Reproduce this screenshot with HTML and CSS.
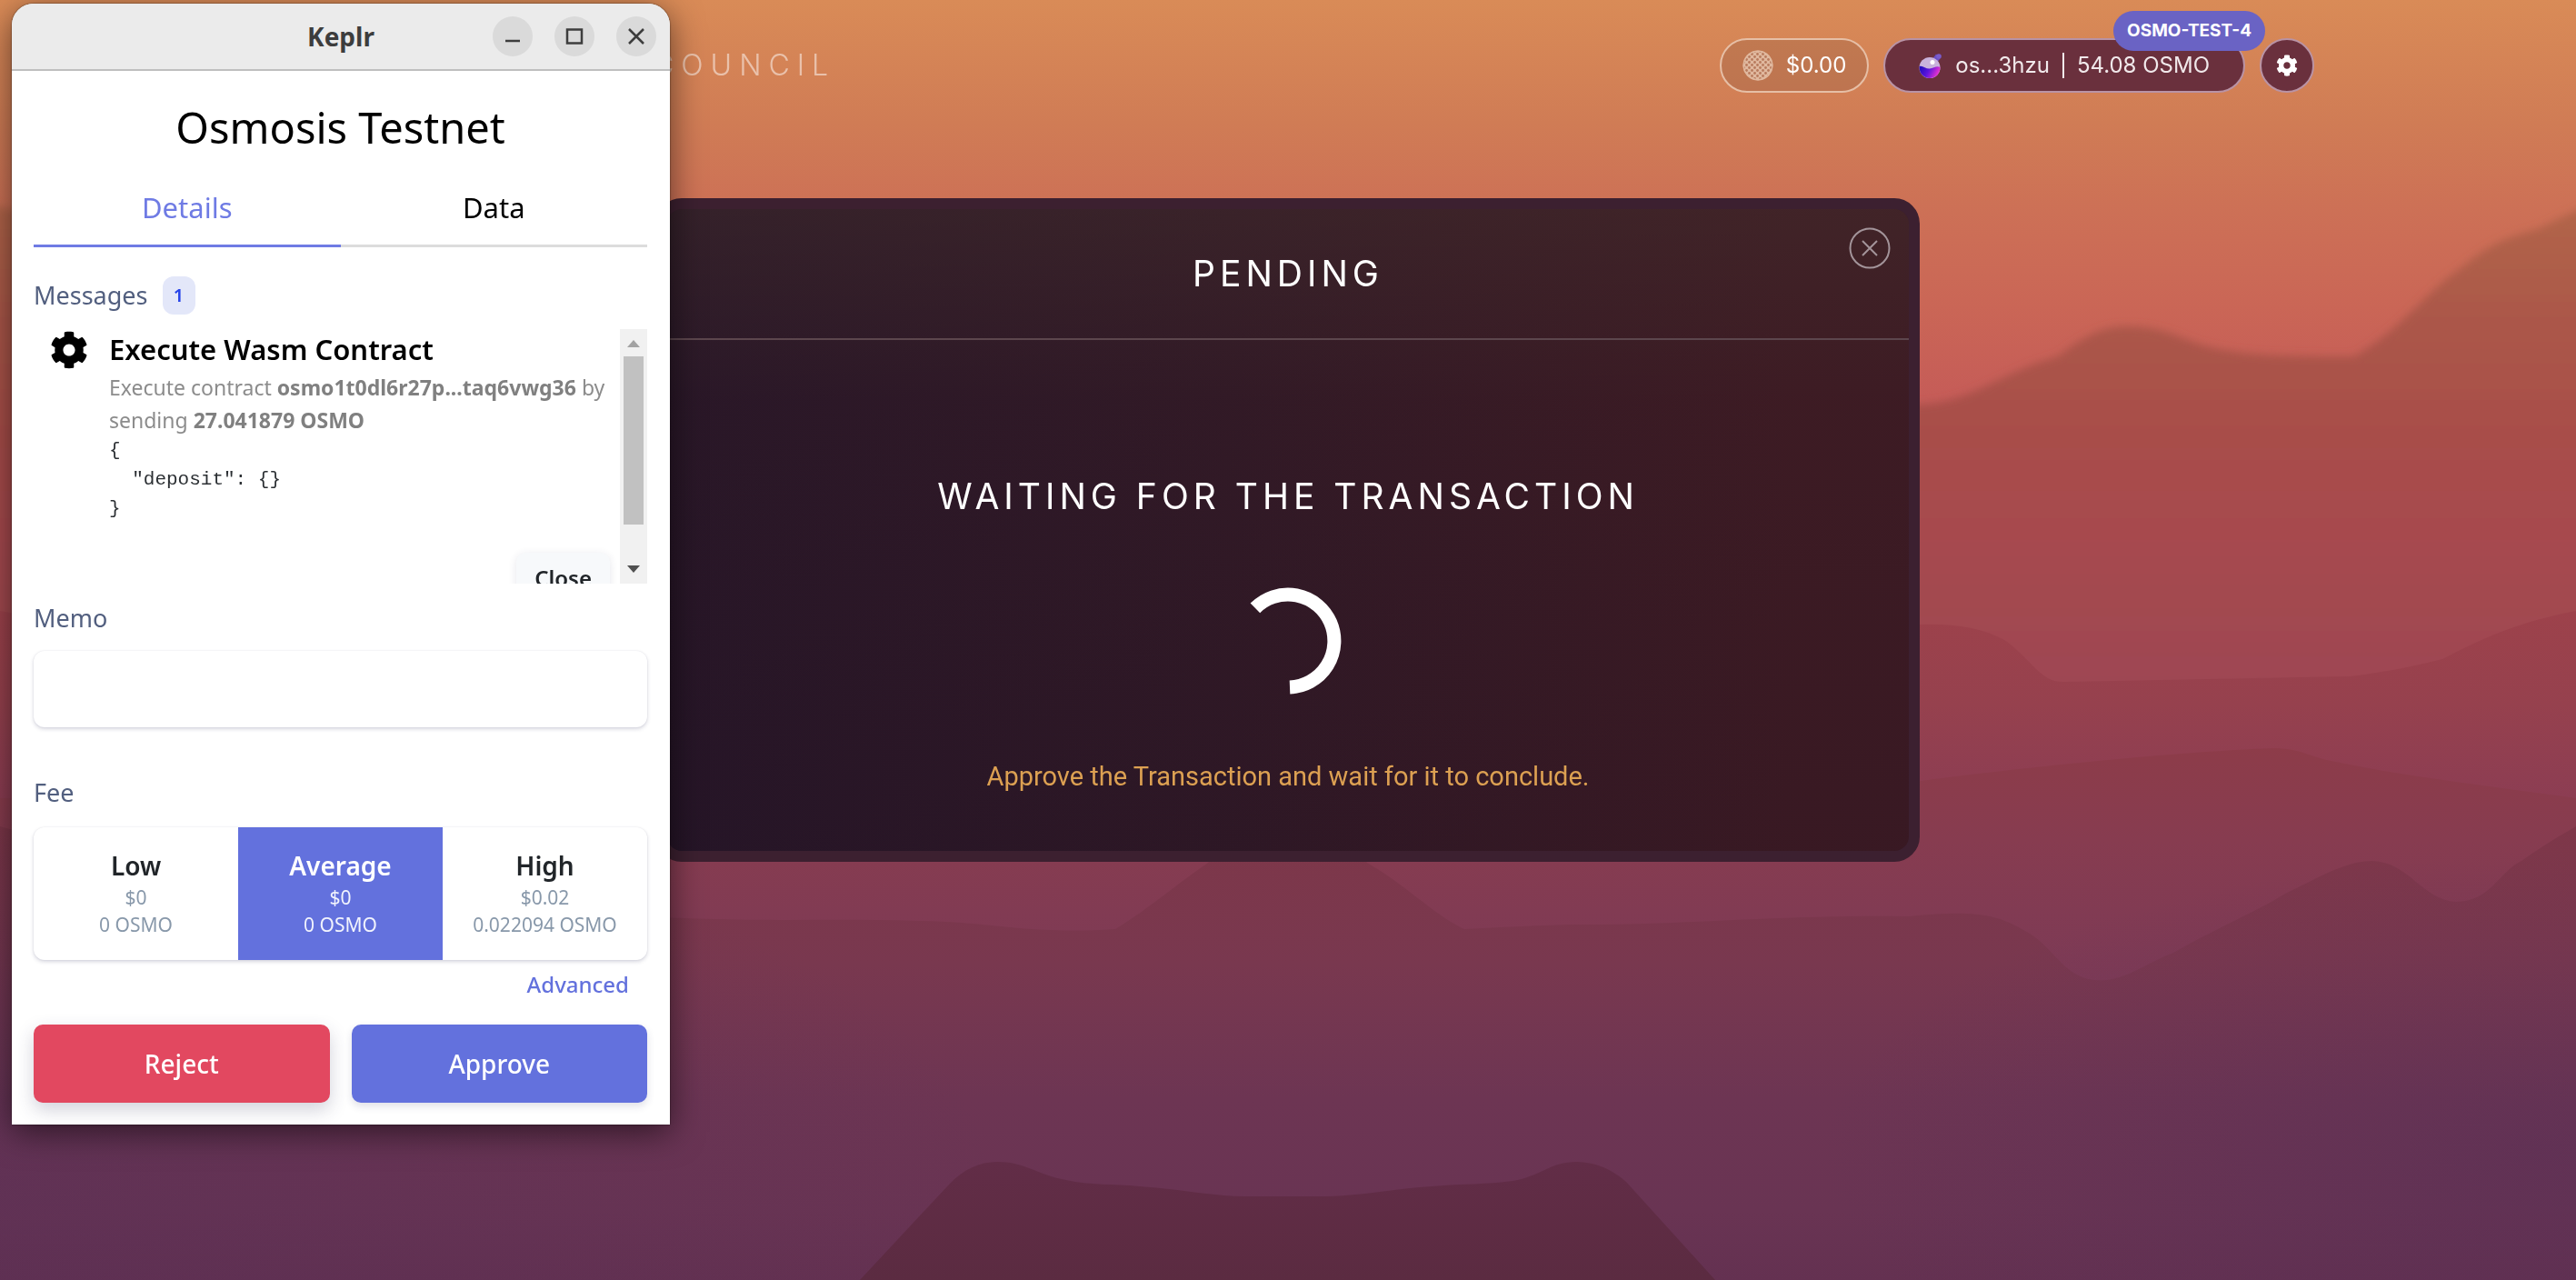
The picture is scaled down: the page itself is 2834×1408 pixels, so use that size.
FILE: index.html
```html
<!DOCTYPE html>
<html lang="en">
<head>
<meta charset="utf-8">
<meta name="viewport" content="width=device-width, initial-scale=1">
<title>Council</title>
<link rel="stylesheet" href="styles.css">
</head>
<body>
<svg class="scene" viewBox="0 0 2834 1408" preserveAspectRatio="none" aria-hidden="true">
  <defs>
    <linearGradient id="sky" gradientUnits="userSpaceOnUse" x1="0" y1="0" x2="0" y2="450">
      <stop offset="0" stop-color="#d98b57"/><stop offset=".3" stop-color="#d07c55"/><stop offset=".5" stop-color="#cd7156"/><stop offset=".75" stop-color="#ca6656"/><stop offset="1" stop-color="#c55b58"/>
    </linearGradient>
    <linearGradient id="ridge1" gradientUnits="userSpaceOnUse" x1="0" y1="220" x2="0" y2="750">
      <stop offset="0" stop-color="#b2664a"/><stop offset=".25" stop-color="#ab574a"/><stop offset=".5" stop-color="#a84d4a"/><stop offset=".68" stop-color="#a74a4e"/><stop offset="1" stop-color="#9e4652"/>
    </linearGradient>
    <linearGradient id="ridge2" gradientUnits="userSpaceOnUse" x1="0" y1="670" x2="0" y2="880">
      <stop offset="0" stop-color="#9d424b"/><stop offset=".5" stop-color="#96414e"/><stop offset="1" stop-color="#8c3d53"/>
    </linearGradient>
    <linearGradient id="ridge3" gradientUnits="userSpaceOnUse" x1="0" y1="820" x2="0" y2="1080">
      <stop offset="0" stop-color="#8d3c49"/><stop offset=".4" stop-color="#873c50"/><stop offset="1" stop-color="#7c3a56"/>
    </linearGradient>
    <linearGradient id="ridge4" gradientUnits="userSpaceOnUse" x1="0" y1="910" x2="0" y2="1408">
      <stop offset="0" stop-color="#7e3749"/><stop offset=".3" stop-color="#79384f"/><stop offset=".6" stop-color="#6d3553"/><stop offset=".85" stop-color="#693453"/><stop offset="1" stop-color="#643151"/>
    </linearGradient>
    <linearGradient id="front" gradientUnits="userSpaceOnUse" x1="0" y1="1278" x2="0" y2="1408">
      <stop offset="0" stop-color="#622d47"/><stop offset="1" stop-color="#5b2b41"/>
    </linearGradient>
    <radialGradient id="dusk">
      <stop offset="0" stop-color="#4c2c58" stop-opacity=".32"/><stop offset="1" stop-color="#4c2c58" stop-opacity="0"/>
    </radialGradient>
    <filter id="soft" x="-5%" y="-5%" width="110%" height="110%"><feGaussianBlur stdDeviation="5"/></filter>
  </defs>
  <rect width="2834" height="1408" fill="url(#sky)"/>
  <path filter="url(#soft)" fill="url(#ridge1)" d="M-60 215C200 260 400 390 700 420C1100 440 1500 400 2113 445C2170 442 2200 410 2264 392C2300 364 2320 358 2345 359C2391 361 2400 376 2442 384C2480 391 2510 392 2590 392C2640 364 2670 320 2707 295C2748 262 2760 262 2794 251C2820 238 2850 222 2900 210V1460H-60Z"/>
  <path fill="url(#ridge2)" d="M0 672C500 760 1500 687 2113 687C2150 686 2180 690 2207 705C2235 726 2245 750 2269 750L2585 744C2620 740 2650 734 2687 725C2730 703 2770 684 2834 672V1408H0Z"/>
  <path fill="url(#ridge3)" d="M0 878C700 870 1500 880 2113 859C2200 847 2400 826 2503 823C2530 823 2545 834 2565 837C2650 855 2750 866 2834 878V1408H0Z"/>
  <path fill="url(#ridge4)" d="M0 909C300 990 500 1000 754 1010C850 1014 920 1010 1012 1013C1090 1014 1130 1028 1227 1022C1262 1001 1295 972 1329 949L1340 930H1490L1504 949C1545 972 1580 1008 1611 1022C1650 1020 1690 1018 1727 1017C1850 1018 1950 1006 2100 1008C2180 1000 2200 1008 2228 1024C2264 1043 2270 1082 2318 1078C2345 1074 2360 1060 2391 1048C2440 1020 2480 1004 2514 983C2550 966 2580 947 2610 947C2650 948 2665 990 2702 992C2740 992 2750 958 2774 947C2795 932 2815 920 2834 909V1408H0Z"/>
  <ellipse cx="0" cy="1300" rx="1100" ry="420" fill="url(#dusk)"/>
  <ellipse cx="2800" cy="1270" rx="800" ry="330" fill="url(#dusk)"/>
  <path fill="url(#front)" d="M946 1408L1044 1303C1060 1286 1078 1278 1097 1278C1128 1278 1140 1292 1173 1298C1200 1304 1225 1302 1254 1305C1300 1308 1335 1316 1370 1316H1459C1500 1315 1530 1308 1575 1305C1610 1302 1635 1303 1664 1299C1695 1294 1705 1278 1735 1278C1760 1279 1775 1288 1789 1300L1887 1408Z"/>
</svg>

<header class="topbar">
  <a class="brand" href="#">COUNCIL</a>
  <nav class="tools" aria-label="Wallet">
    <button class="pill price" type="button">
      <svg class="coin" viewBox="0 0 34 34" aria-hidden="true">
        <defs><pattern id="mesh" width="6" height="6" patternUnits="userSpaceOnUse"><circle cx="1.5" cy="1.5" r="1.4" fill="#b87a5c"/><circle cx="4.5" cy="4.5" r="1.4" fill="#b87a5c"/></pattern></defs>
        <circle cx="17" cy="17" r="16.500" fill="#e0b89e"/><circle cx="17" cy="17" r="15" fill="url(#mesh)"/><circle cx="17" cy="17" r="16" fill="none" stroke="#e0b89e" stroke-width="1"/>
      </svg>
      <span>$0.00</span>
    </button>
    <div class="wallet">
      <button class="pill account" type="button">
        <svg class="flask" viewBox="0 0 26 28" aria-hidden="true">
          <defs><linearGradient id="potion" x1="0" y1="0" x2="1" y2="0.3"><stop offset="0" stop-color="#1c0bb5"/><stop offset=".5" stop-color="#5a14dc"/><stop offset="1" stop-color="#e832d0"/></linearGradient></defs>
          <path d="M15 7L19 1.500L24 5.500L20 11Z" fill="#6a4fc4"/><circle cx="22" cy="4" r="2.800" fill="#7a5ccc"/>
          <circle cx="12" cy="16.500" r="11.500" fill="#c9b2dc"/>
          <path d="M.6 15C4 13.500 8 18 12 17.500C16 17 20 14 23.500 16C23.500 23 18.500 28 12 28S.2 22.500.6 15Z" fill="url(#potion)"/>
          <circle cx="15" cy="10.500" r="2.500" fill="#fff"/>
        </svg>
        <span>os...3hzu</span><i class="bar"></i><span>54.08 OSMO</span>
      </button>
      <span class="network">OSMO-TEST-4</span>
    </div>
    <button class="pill settings" type="button" aria-label="Settings">
      <svg viewBox="0 0 512 512" aria-hidden="true"><path fill="currentColor" d="M487.4 315.700l-42.600-24.600c4.300-23.200 4.300-47 0-70.200l42.600-24.600c4.900-2.800 7.100-8.600 5.500-14-11.100-35.600-30-67.800-54.700-94.600-3.800-4.100-10-5.100-14.800-2.300L380.800 110c-17.900-15.400-38.500-27.300-60.800-35.100V25.800c0-5.600-3.900-10.500-9.400-11.700-36.700-8.200-74.300-7.800-109.200 0-5.500 1.200-9.400 6.100-9.400 11.700V75c-22.200 7.900-42.800 19.800-60.800 35.100L88.700 85.500c-4.900-2.800-11-1.900-14.800 2.300-24.700 26.700-43.600 58.900-54.700 94.600-1.700 5.400.6 11.200 5.500 14L67.300 221c-4.300 23.200-4.300 47 0 70.200l-42.600 24.600c-4.900 2.800-7.100 8.600-5.500 14 11.100 35.600 30 67.800 54.700 94.600 3.800 4.100 10 5.100 14.800 2.300l42.600-24.600c17.900 15.400 38.500 27.300 60.800 35.100v49.200c0 5.600 3.900 10.500 9.400 11.700 36.700 8.200 74.300 7.800 109.200 0 5.500-1.200 9.400-6.100 9.400-11.700v-49.200c22.200-7.900 42.800-19.800 60.800-35.100l42.600 24.600c4.900 2.800 11 1.900 14.800-2.300 24.700-26.700 43.600-58.900 54.700-94.600 1.500-5.500-.7-11.300-5.600-14.100zM256 336c-44.100 0-80-35.900-80-80s35.900-80 80-80 80 35.900 80 80-35.900 80-80 80z"/></svg>
    </button>
  </nav>
</header>

<main class="stage">
  <section class="dialog" role="dialog" aria-labelledby="dialog-title">
    <div class="dialog-head">
      <h2 id="dialog-title" class="headline">PENDING</h2>
      <button class="dismiss" type="button" aria-label="Close dialog">
        <svg viewBox="0 0 46 46" fill="none" stroke="#a3949a" stroke-width="2" aria-hidden="true"><circle cx="23" cy="23" r="21.500"/><path d="M15 15L31 31M31 15L15 31"/></svg>
      </button>
    </div>
    <div class="dialog-body">
      <p class="headline">WAITING FOR THE TRANSACTION</p>
      <svg class="spinner" viewBox="0 0 118 118" fill="none" stroke="#fff" stroke-width="15" aria-hidden="true"><path d="M22.900 22.900A51 51 0 1 1 61 110"/></svg>
      <p class="hint">Approve the Transaction and wait for it to conclude.</p>
    </div>
  </section>
</main>

<aside class="window" aria-label="Keplr">
  <div class="titlebar">
    <span class="window-name">Keplr</span>
    <div class="window-controls">
      <button type="button" aria-label="Minimize"><svg viewBox="0 0 44 44"><path d="M14 27H30"/></svg></button>
      <button type="button" aria-label="Maximize"><svg viewBox="0 0 44 44"><path d="M14 14.500H30V29.500H14Z"/></svg></button>
      <button type="button" aria-label="Close window"><svg viewBox="0 0 44 44"><path d="M14 14L30 30M30 14L14 30"/></svg></button>
    </div>
  </div>
  <div class="window-body">
    <h1>Osmosis Testnet</h1>
    <div class="tabs" role="tablist">
      <button class="tab active" type="button" role="tab" aria-selected="true">Details</button>
      <button class="tab" type="button" role="tab" aria-selected="false">Data</button>
    </div>
    <div class="section-label messages-label">Messages <span class="count">1</span></div>
    <div class="messages">
      <div class="message">
        <svg class="gear" viewBox="0 0 512 512" aria-hidden="true"><path d="M487.4 315.700l-42.600-24.600c4.300-23.200 4.300-47 0-70.200l42.600-24.600c4.900-2.800 7.100-8.600 5.500-14-11.100-35.600-30-67.800-54.700-94.600-3.800-4.100-10-5.100-14.800-2.300L380.800 110c-17.900-15.400-38.500-27.300-60.800-35.100V25.800c0-5.600-3.900-10.500-9.400-11.700-36.700-8.200-74.300-7.800-109.200 0-5.500 1.200-9.400 6.100-9.400 11.700V75c-22.200 7.900-42.800 19.800-60.800 35.100L88.700 85.500c-4.900-2.800-11-1.900-14.800 2.300-24.700 26.700-43.600 58.900-54.700 94.600-1.700 5.400.6 11.200 5.500 14L67.300 221c-4.300 23.200-4.300 47 0 70.200l-42.600 24.600c-4.900 2.800-7.100 8.600-5.500 14 11.100 35.600 30 67.800 54.700 94.600 3.800 4.100 10 5.100 14.800 2.300l42.600-24.600c17.900 15.400 38.500 27.300 60.800 35.100v49.200c0 5.600 3.900 10.500 9.400 11.700 36.700 8.200 74.300 7.800 109.200 0 5.500-1.200 9.400-6.100 9.400-11.700v-49.200c22.200-7.900 42.800-19.800 60.800-35.100l42.600 24.600c4.900 2.800 11 1.900 14.800-2.300 24.700-26.700 43.600-58.900 54.700-94.600 1.500-5.500-.7-11.300-5.600-14.100zM256 336c-44.100 0-80-35.900-80-80s35.900-80 80-80 80 35.900 80 80-35.900 80-80 80z"/></svg>
        <div class="message-text">
          <h3>Execute Wasm Contract</h3>
          <p>Execute contract <b>osmo1t0dl6r27p...taq6vwg36</b> by sending <b>27.041879 OSMO</b></p>
<pre>{
  "deposit": {}
}</pre>
          <button class="collapse" type="button">Close</button>
        </div>
      </div>
      <div class="scrollbar" aria-hidden="true">
        <svg viewBox="0 0 30 30"><path fill="#a3a3a3" d="M8 20L15 12L22 20Z"/></svg>
        <div class="track"><div class="thumb"></div></div>
        <svg viewBox="0 0 30 30"><path fill="#505050" d="M8 10L15 18L22 10Z"/></svg>
      </div>
    </div>
    <label class="section-label memo-label" for="memo">Memo</label>
    <input class="memo" id="memo" type="text">
    <div class="section-label fee-label" id="fee-label">Fee</div>
    <div class="fees" role="group" aria-labelledby="fee-label">
      <button class="fee" type="button"><b>Low</b><span>$0</span><span>0 OSMO</span></button>
      <button class="fee selected" type="button" aria-pressed="true"><b>Average</b><span>$0</span><span>0 OSMO</span></button>
      <button class="fee" type="button"><b>High</b><span>$0.02</span><span>0.022094 OSMO</span></button>
    </div>
    <a class="advanced" href="#">Advanced</a>
    <div class="actions">
      <button class="action reject" type="button">Reject</button>
      <button class="action approve" type="button">Approve</button>
    </div>
  </div>
</aside>
</body>
</html>
```
FILE: styles.css
```css
* { box-sizing: border-box; }

body {
  margin: 0;
  min-height: 100vh;
  background: #6a3453;
  font-family: Inter, sans-serif;
  color: #fff;
}

button {
  margin: 0;
  padding: 0;
  border: 0;
  background: none;
  color: inherit;
  font: inherit;
  cursor: pointer;
}

h1, h2, h3, p, pre { margin: 0; }
a { text-decoration: none; }
svg { display: block; }

.scene {
  position: fixed;
  inset: 0;
  z-index: -1;
  width: 100%;
  height: 100%;
}

/* Top bar */
.topbar {
  display: flex;
  align-items: center;
  justify-content: space-between;
  padding: 42px 288px 0 718px;
}

.brand {
  color: #fff;
  opacity: .5;
  font-size: 32px;
  font-weight: 300;
  line-height: 56px;
  letter-spacing: 8px;
}

.tools { display: flex; gap: 16px; }

.pill {
  display: flex;
  align-items: center;
  justify-content: center;
  height: 60px;
  border: 2px solid #e6bfa6;
  border-radius: 30px;
  font-size: 24px;
  line-height: 32px;
}

.price {
  gap: 14px;
  padding: 0 23px;
  background: rgba(110, 70, 60, .2);
}

.coin { width: 34px; height: 34px; }

.wallet { position: relative; }

.account {
  gap: 14px;
  padding: 0 37px;
  border-color: #b993a5;
  background: #6a303d;
  color: #f1e9eb;
}

.flask { width: 26px; height: 28px; }
.bar { width: 2px; height: 28px; background: #f1e9eb; }

.network {
  position: absolute;
  top: -30px;
  right: -22px;
  padding: 0 15px;
  border-radius: 22px;
  background: #6a63c4;
  font-size: 19px;
  font-weight: 700;
  line-height: 44px;
  white-space: nowrap;
}

.settings {
  width: 60px;
  border-color: #b993a5;
  background: #6a303d;
}

.settings svg { width: 24px; height: 24px; }

/* Transaction dialog */
.stage {
  display: flex;
  justify-content: center;
  padding: 116px 48px 48px;
}

.dialog {
  width: 100%;
  max-width: 1390px;
  border: 12px solid #3c2030;
  border-radius: 28px;
  background:
    linear-gradient(to bottom, rgba(66, 44, 44, .5), rgba(52, 28, 38, .2) 30%, rgba(30, 16, 34, .2)),
    linear-gradient(to right, #271628, #311926 45%, #3f1b23 90%);
}

.dialog-head {
  display: grid;
  grid-template-columns: 1fr auto 1fr;
  align-items: center;
  height: 144px;
  padding: 20px;
  border-bottom: 2px solid #5c464d;
}

.headline {
  font-size: 39px;
  font-weight: 400;
  line-height: 60px;
  letter-spacing: 5px;
}

.dialog-head .headline { grid-column: 2; }

.dismiss {
  align-self: start;
  justify-self: end;
}

.dismiss svg { width: 46px; height: 46px; }

.dialog-body {
  display: flex;
  flex-direction: column;
  align-items: center;
  gap: 70px;
  padding: 142px 24px 62px;
}

.spinner { width: 118px; height: 118px; }

.hint {
  color: #dca052;
  font-family: Roboto, sans-serif;
  font-size: 29px;
  line-height: 40px;
}

/* Wallet window */
.window {
  position: absolute;
  top: 4px;
  left: 13px;
  width: 724px;
  border-radius: 24px 24px 0 0;
  background: #fff;
  box-shadow: 0 0 2px rgba(0, 0, 0, .7), 0 8px 36px rgba(0, 0, 0, .55);
  color: #000;
  font-family: "Noto Sans", sans-serif;
}

.titlebar {
  display: grid;
  grid-template-columns: 1fr auto 1fr;
  align-items: center;
  height: 74px;
  padding: 0 15px;
  border-bottom: 2px solid #bfbfbf;
  border-radius: 24px 24px 0 0;
  background: #ebebeb;
}

.window-name {
  grid-column: 2;
  color: #3d3d3d;
  font-size: 28px;
  font-weight: 700;
  line-height: 40px;
}

.window-controls {
  display: flex;
  justify-self: end;
  gap: 24px;
}

.window-controls button {
  border-radius: 50%;
  background: #dadada;
}

.window-controls svg {
  width: 44px;
  height: 44px;
  fill: none;
  stroke: #3d3d3d;
  stroke-width: 2.5;
}

.window-body {
  display: flex;
  flex-direction: column;
  padding: 30px 25px 24px 24px;
}

h1 {
  font-size: 47px;
  font-weight: 400;
  line-height: 64px;
  text-align: center;
}

.tabs { display: grid; grid-template-columns: 1fr 1fr; }

.tab {
  padding: 36px 0 21px;
  border-bottom: 3px solid #dcdcdc;
  font-size: 31px;
  line-height: 40px;
}

.tab.active {
  border-color: #6f7be4;
  color: #6f7be4;
}

.section-label {
  color: #525f7f;
  font-size: 27px;
  line-height: 40px;
}

.messages-label {
  display: flex;
  align-items: center;
  gap: 16px;
  margin-top: 32px;
}

.count {
  width: 36px;
  border-radius: 12px;
  background: #e3e7f9;
  color: #2643e9;
  font-size: 20px;
  font-weight: 600;
  line-height: 42px;
  text-align: center;
}

.messages {
  display: flex;
  height: 280px;
  margin-top: 16px;
  overflow: hidden;
}

.message {
  display: flex;
  flex: 1;
  align-items: flex-start;
  gap: 23px;
  padding: 2px 11px 0 18px;
}

.gear {
  flex: none;
  width: 42px;
  height: 42px;
}

.message-text {
  display: flex;
  flex: 1;
  flex-direction: column;
}

h3 {
  font-size: 31px;
  font-weight: 600;
  line-height: 40px;
}

.message p {
  margin-top: 4px;
  color: #8c8c8c;
  font-size: 23px;
  line-height: 36px;
}

.message b { color: #808080; }

.message pre {
  color: #2b2f33;
  font-family: "Liberation Mono", monospace;
  font-size: 21px;
  line-height: 32px;
}

.collapse {
  align-self: flex-end;
  margin-top: 32px;
  padding: 0 20px;
  border-radius: 10px;
  background: #f7f9fb;
  box-shadow: 0 2px 10px rgba(50, 50, 93, .12);
  color: #212529;
  font-size: 24px;
  font-weight: 600;
  line-height: 56px;
}

.scrollbar {
  display: flex;
  flex-direction: column;
  width: 30px;
  background: #f1f1f1;
}

.scrollbar svg { width: 30px; height: 30px; }
.track { flex: 1; padding: 0 4px; }
.thumb { height: 84%; background: #c1c1c1; }

.memo-label { margin-top: 18px; }

.memo {
  width: 100%;
  height: 84px;
  margin-top: 16px;
  padding: 0 20px;
  border: 0;
  border-radius: 12px;
  background: #fff;
  box-shadow: 0 2px 4px rgba(50, 50, 93, .2), 0 0 2px rgba(50, 50, 93, .1);
  font-size: 24px;
}

.fee-label { margin-top: 52px; }

.fees {
  display: grid;
  grid-template-columns: 1fr 1fr 1fr;
  margin-top: 18px;
  border-radius: 12px;
  box-shadow: 0 2px 4px rgba(50, 50, 93, .2), 0 0 2px rgba(50, 50, 93, .1);
}

.fee {
  display: flex;
  flex-direction: column;
  align-items: center;
  padding: 22px 0 24px;
  color: #8898aa;
  font-size: 21px;
  line-height: 30px;
}

.fee b {
  color: #212529;
  font-size: 28px;
  font-weight: 600;
  line-height: 40px;
}

.fee.selected { background: #6371dd; color: #f1f3fd; }
.fee.selected b { color: #fff; }

.advanced {
  align-self: flex-end;
  margin: 10px 20px 0 0;
  color: #6371dd;
  font-size: 24px;
  font-weight: 500;
  line-height: 34px;
}

.actions {
  display: grid;
  grid-template-columns: 1fr 1fr;
  gap: 24px;
  margin-top: 27px;
}

.action {
  border-radius: 10px;
  box-shadow: 0 4px 8px rgba(50, 50, 93, .15);
  color: #fff;
  font-size: 28px;
  font-weight: 500;
  line-height: 86px;
}

.reject { background: #e24860; box-shadow: 0 8px 20px rgba(50, 50, 93, .22); }
.approve { background: #6371dd; }
```
